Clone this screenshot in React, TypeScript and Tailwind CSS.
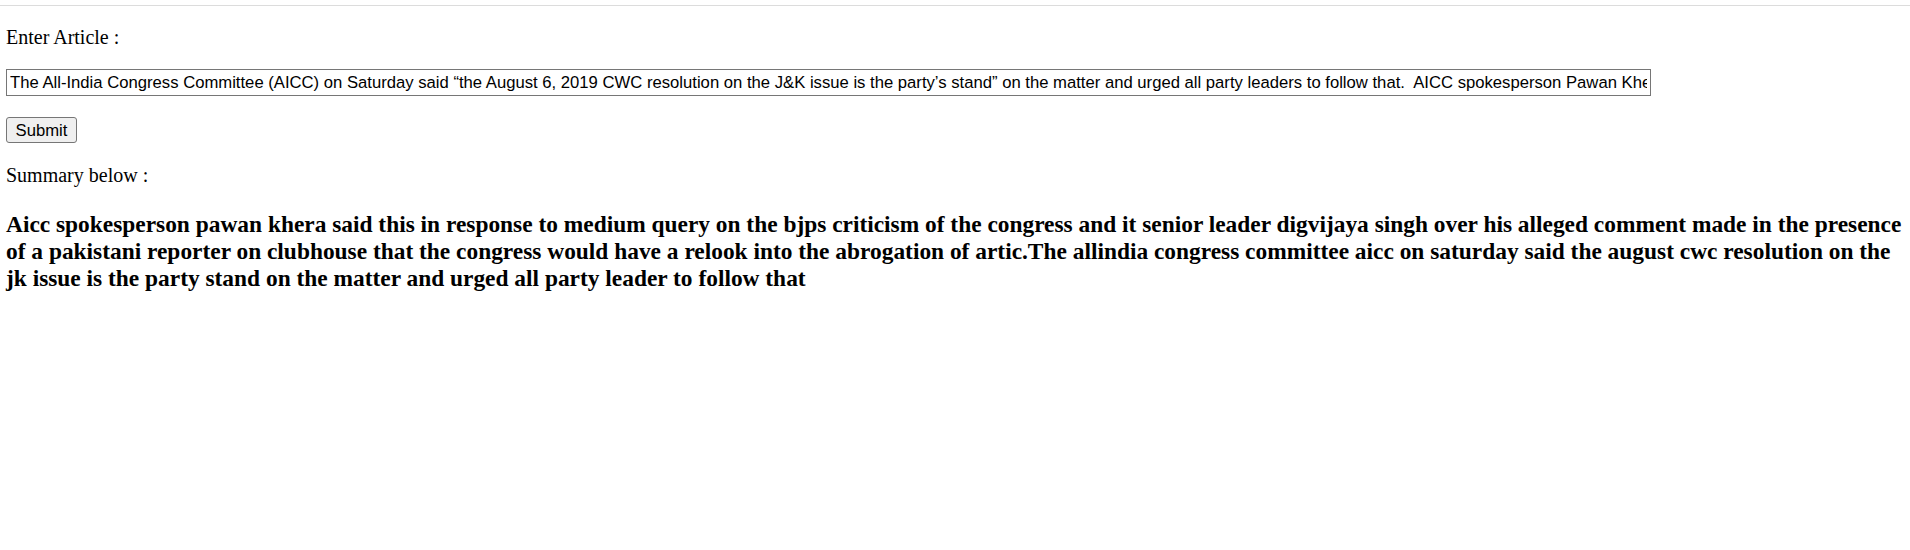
export default function App() {
  const article =
    "The All-India Congress Committee (AICC) on Saturday said “the August 6, 2019 CWC resolution on the J&K issue is the party’s stand” on the matter and urged all party leaders to follow that.  AICC spokesperson Pawan Khera said this in response to media queries on the BJP’s criticism of the Congress and its senior leader Digvijaya Singh over his alleged comments made in the presence of a Pakistani reporter on Clubhouse."

  const summary =
    "Aicc spokesperson pawan khera said this in response to medium query on the bjps criticism of the congress and it senior leader digvijaya singh over his alleged comment made in the presence of a pakistani reporter on clubhouse that the congress would have a relook into the abrogation of artic.The allindia congress committee aicc on saturday said the august cwc resolution on the jk issue is the party stand on the matter and urged all party leader to follow that"

  return (
    <div className="min-h-screen bg-white text-black">
      <div className="pt-[5px]">
        <div className="h-px bg-[#dcdcdc]" />
      </div>

      <main className="px-[6px] font-['Liberation_Serif',serif]">
        <p className="mt-[20px] text-[20px] leading-[23px]">Enter Article :</p>

        <input
          type="text"
          defaultValue={article}
          className="mt-[20px] block w-[1645px] h-[27px] border border-[#767676] px-[3px] text-[16.67px] font-['Liberation_Sans',sans-serif] text-black outline-none"
        />

        <button className="mt-[21px] block w-[71px] h-[26px] border border-[#767676] rounded-[3px] bg-[#efefef] text-[16.67px] font-['Liberation_Sans',sans-serif] text-black">
          Submit
        </button>

        <p className="mt-[21px] text-[20px] leading-[23px]">Summary below :</p>

        <h3 className="mt-[24px] text-[23.4px] leading-[27px] font-bold">{summary}</h3>
      </main>
    </div>
  )
}
